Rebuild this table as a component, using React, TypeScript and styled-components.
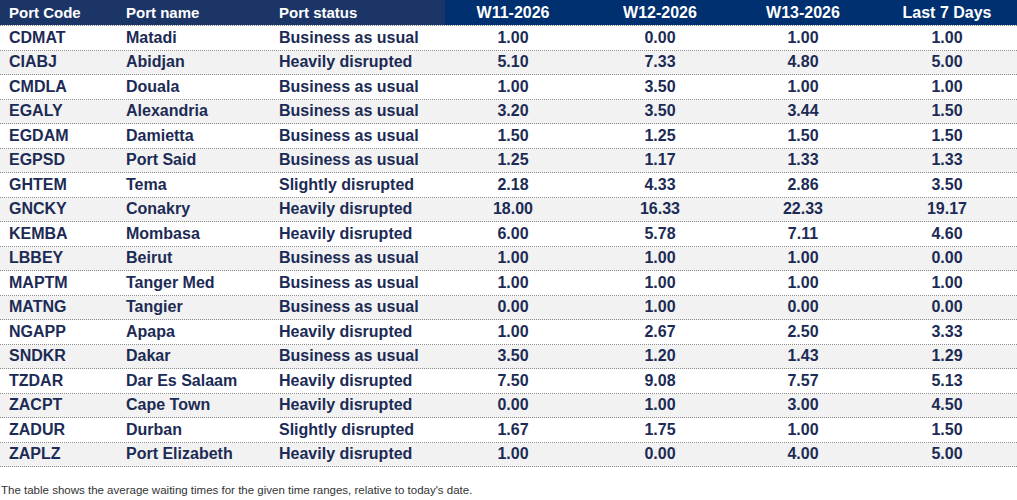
import React from 'react';
import styled, { createGlobalStyle } from 'styled-components';

const GlobalStyle = createGlobalStyle`
  html, body {
    margin: 0;
    padding: 0;
    background: #fff;
    font-family: "Liberation Sans", Arial, sans-serif;
  }
`;

const COLUMNS = '117px 153px 175px 136px 158px 128px 150px';

const Page = styled.div`
  width: 1017px;
  display: flex;
  flex-direction: column;
`;

const HeaderRow = styled.div`
  display: grid;
  grid-template-columns: ${COLUMNS};
  height: 25px;
  border-bottom: 1px dotted #8a8a8a;
  box-sizing: content-box;
`;

const HeaderCell = styled.div<{ $num?: boolean; $shift?: number }>`
  display: flex;
  align-items: center;
  justify-content: ${(p) => (p.$num ? 'center' : 'flex-start')};
  padding-left: ${(p) => (p.$num ? `${p.$shift ?? 0}px` : '9px')};
  background: ${(p) => (p.$num ? '#00306f' : '#1c3567')};
  color: #fff;
  font-weight: bold;
  font-size: ${(p) => (p.$num ? '16px' : '15px')};
  white-space: nowrap;
`;

const Row = styled.div<{ $alt: boolean }>`
  display: grid;
  grid-template-columns: ${COLUMNS};
  height: 24.5px;
  box-sizing: border-box;
  background: ${(p) => (p.$alt ? '#f2f2f2' : '#fff')};
  border-bottom: 1px dotted #8a8a8a;
`;

const Cell = styled.div<{ $num?: boolean; $shift?: number }>`
  display: flex;
  align-items: center;
  justify-content: ${(p) => (p.$num ? 'center' : 'flex-start')};
  padding-left: ${(p) => (p.$num ? `${p.$shift ?? 0}px` : '9px')};
  color: #1c2b55;
  font-weight: bold;
  font-size: 16px;
  white-space: nowrap;
`;

const Note = styled.p`
  margin: 17px 0 0 1px;
  font-size: 11.5px;
  color: #333;
`;

type Port = {
  code: string;
  name: string;
  status: string;
  values: string[];
};

const ports: Port[] = [
  { code: 'CDMAT', name: 'Matadi', status: 'Business as usual', values: ['1.00', '0.00', '1.00', '1.00'] },
  { code: 'CIABJ', name: 'Abidjan', status: 'Heavily disrupted', values: ['5.10', '7.33', '4.80', '5.00'] },
  { code: 'CMDLA', name: 'Douala', status: 'Business as usual', values: ['1.00', '3.50', '1.00', '1.00'] },
  { code: 'EGALY', name: 'Alexandria', status: 'Business as usual', values: ['3.20', '3.50', '3.44', '1.50'] },
  { code: 'EGDAM', name: 'Damietta', status: 'Business as usual', values: ['1.50', '1.25', '1.50', '1.50'] },
  { code: 'EGPSD', name: 'Port Said', status: 'Business as usual', values: ['1.25', '1.17', '1.33', '1.33'] },
  { code: 'GHTEM', name: 'Tema', status: 'Slightly disrupted', values: ['2.18', '4.33', '2.86', '3.50'] },
  { code: 'GNCKY', name: 'Conakry', status: 'Heavily disrupted', values: ['18.00', '16.33', '22.33', '19.17'] },
  { code: 'KEMBA', name: 'Mombasa', status: 'Heavily disrupted', values: ['6.00', '5.78', '7.11', '4.60'] },
  { code: 'LBBEY', name: 'Beirut', status: 'Business as usual', values: ['1.00', '1.00', '1.00', '0.00'] },
  { code: 'MAPTM', name: 'Tanger Med', status: 'Business as usual', values: ['1.00', '1.00', '1.00', '1.00'] },
  { code: 'MATNG', name: 'Tangier', status: 'Business as usual', values: ['0.00', '1.00', '0.00', '0.00'] },
  { code: 'NGAPP', name: 'Apapa', status: 'Heavily disrupted', values: ['1.00', '2.67', '2.50', '3.33'] },
  { code: 'SNDKR', name: 'Dakar', status: 'Business as usual', values: ['3.50', '1.20', '1.43', '1.29'] },
  { code: 'TZDAR', name: 'Dar Es Salaam', status: 'Heavily disrupted', values: ['7.50', '9.08', '7.57', '5.13'] },
  { code: 'ZACPT', name: 'Cape Town', status: 'Heavily disrupted', values: ['0.00', '1.00', '3.00', '4.50'] },
  { code: 'ZADUR', name: 'Durban', status: 'Slightly disrupted', values: ['1.67', '1.75', '1.00', '1.50'] },
  { code: 'ZAPLZ', name: 'Port Elizabeth', status: 'Heavily disrupted', values: ['1.00', '0.00', '4.00', '5.00'] },
];

const periods = ['W11-2026', 'W12-2026', 'W13-2026', 'Last 7 Days'];
const shifts = [0, 0, 0, 10];

const App: React.FC = () => (
  <>
    <GlobalStyle />
    <Page>
      <HeaderRow>
        <HeaderCell>Port Code</HeaderCell>
        <HeaderCell>Port name</HeaderCell>
        <HeaderCell>Port status</HeaderCell>
        {periods.map((p, i) => (
          <HeaderCell key={p} $num $shift={shifts[i]}>{p}</HeaderCell>
        ))}
      </HeaderRow>
      {ports.map((port, idx) => (
        <Row key={port.code} $alt={idx % 2 === 1}>
          <Cell>{port.code}</Cell>
          <Cell>{port.name}</Cell>
          <Cell>{port.status}</Cell>
          {port.values.map((v, i) => (
            <Cell key={i} $num $shift={shifts[i]}>{v}</Cell>
          ))}
        </Row>
      ))}
      <Note>The table shows the average waiting times for the given time ranges, relative to today's date.</Note>
    </Page>
  </>
);

export default App;
